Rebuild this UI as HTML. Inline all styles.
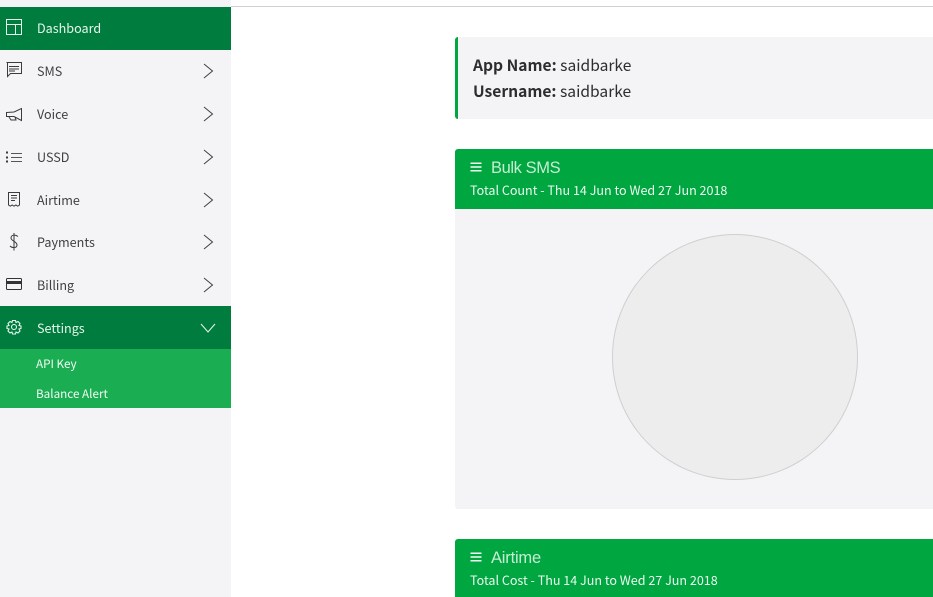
<!DOCTYPE html>
<html><head><meta charset="utf-8"><style>
html,body{margin:0;padding:0;width:933px;height:597px;overflow:hidden;background:#fff}
body{position:relative;font-family:"Noto Sans CJK JP","Liberation Sans",sans-serif;color:#333}
div,svg,span.t{position:absolute}
.t{white-space:nowrap;line-height:20px}
.nav{left:37px;font-size:12.6px;color:#3f3f44}
.w{color:#e6f7ec}
svg{overflow:visible;fill:none}
</style></head><body>
<div style="left:0;top:0;width:231px;height:597px;background:#f4f4f6"></div>
<div style="left:231px;top:6px;width:702px;height:1px;background:#cfcfd4"></div>
<div style="left:0;top:7px;width:231px;height:43px;background:#007c3e"></div>
<div style="left:0;top:306px;width:231px;height:43px;background:#007c3e"></div>
<div style="left:0;top:349px;width:231px;height:59px;background:#1bad52"></div>

<span class="t nav w" style="top:18px">Dashboard</span>
<span class="t nav" style="top:61px">SMS</span>
<span class="t nav" style="top:104px">Voice</span>
<span class="t nav" style="top:147px">USSD</span>
<span class="t nav" style="top:190px">Airtime</span>
<span class="t nav" style="top:232px">Payments</span>
<span class="t nav" style="top:275px">Billing</span>
<span class="t nav w" style="top:318px">Settings</span>
<span class="t w" style="left:36px;top:354px;font-size:11.7px;color:#f0fbf4">API Key</span>
<span class="t w" style="left:36px;top:384px;font-size:11.7px;color:#f0fbf4">Balance Alert</span>

<svg style="left:0;top:0" width="231" height="420">
<g stroke="#e8f7ee" stroke-width="1">
<rect x="6.500" y="19.500" width="15" height="15"/><path d="M7 24.500H21M15.500 25V34"/>
</g>
<g stroke="#3a3a3f" stroke-width="1">
<path d="M6.500 62.500H21.500V73.500H10.500L7.500 76.500V62.500Z"/><path d="M9 66.500H19M9 69H19M9 71H15"/>
<path d="M6.500 112.500L14 112L21.500 108.500V120.500L14 116.500H6.500ZM9 117L11 120H16L15 117"/>
<path d="M11 153.500H22M11 157.500H22M11 161.500H22" stroke="#55555a"/>
<path d="M6 152.500H8M6 157.500H8M6 161.500H8" stroke-width="2"/>
<path d="M8.500 192.500H19.500V205L17.700 206.200L15.900 205L14 206.200L12.100 205L10.300 206.200L8.500 205Z"/><path d="M11 195.500H17M11 198H17M11 200.500H15"/>
<path d="M18 236.500C15 234 11 235 11 238C11 241 17 241.500 17 245C17 248 12.500 248.500 10 246M14 233V250.500"/>
</g>
<rect x="6.500" y="278.500" width="15" height="11" rx="1" stroke="#333"/>
<rect x="6" y="281" width="16" height="3" fill="#333"/>
<g stroke="#e8f7ee" stroke-width="1.100">
<circle cx="14" cy="327" r="2.500"/>
<path d="M12.500 320.500H15.500L16 322.500L18 321.500L20 323.500L19 325.500L21 326V328.500L19 329L20 331L18 333L16 332L15.500 334H12.500L12 332L10 333L8 331L9 329L7 328.500V326L9 325.500L8 323.500L10 321.500L12 322.500Z"/>
</g>
<g stroke="#3f3f44" stroke-width="1">
<path d="M204 64L212.500 71L204 78"/>
<path d="M204 107L212.500 114L204 121"/>
<path d="M204 150L212.500 157L204 164"/>
<path d="M204 193L212.500 200L204 207"/>
<path d="M204 235L212.500 242L204 249"/>
<path d="M204 278L212.500 285L204 292"/>
</g>
<path d="M201 324L208 332L215 324" stroke="#e8f7ee" stroke-width="1"/>
</svg>

<div style="left:455px;top:37px;width:490px;height:82px;background:#f4f4f6;border-radius:3px"></div>
<div style="left:455px;top:37px;width:3px;height:82px;background:#00a63f;border-radius:3px 0 0 3px"></div>
<span class="t" style="left:473px;top:54.500px;font-size:15.6px;color:#2d2d30"><b>App Name:</b> saidbarke</span>
<span class="t" style="left:473px;top:80.500px;font-size:15.6px;color:#2d2d30"><b>Username:</b> saidbarke</span>

<div style="left:455px;top:149px;width:490px;height:60px;background:#00a63f;border-radius:3px 3px 0 0"></div>
<div style="left:455px;top:209px;width:490px;height:300px;background:#f4f4f6;border-radius:0 0 3px 3px"></div>
<div style="left:612px;top:234px;width:244px;height:243.500px;border:1px solid #cfcfcf;border-radius:50%;background:#ededed"></div>
<div style="left:455px;top:539px;width:490px;height:70px;background:#00a63f;border-radius:3px 3px 0 0"></div>

<svg style="left:0;top:0" width="933" height="597"><path d="M470.500 163.300H481.500M470.500 167H481.500M470.500 170.700H481.500M470.500 553.300H481.500M470.500 557H481.500M470.500 560.700H481.500" stroke="#f4fcf7" stroke-width="1.500"/></svg>
<span class="t" style="left:491px;top:158px;font-size:16.500px;letter-spacing:-.4px;color:#c4eed3;font-family:'Liberation Sans',sans-serif">Bulk SMS</span>
<span class="t" style="left:470px;top:180px;font-size:12.560px;color:#ecfaf1">Total Count - Thu 14 Jun to Wed 27 Jun 2018</span>
<span class="t" style="left:491px;top:548px;font-size:16.500px;letter-spacing:-.2px;color:#c4eed3;font-family:'Liberation Sans',sans-serif">Airtime</span>
<span class="t" style="left:470px;top:570px;font-size:12.560px;color:#ecfaf1">Total Cost - Thu 14 Jun to Wed 27 Jun 2018</span>
</body></html>
